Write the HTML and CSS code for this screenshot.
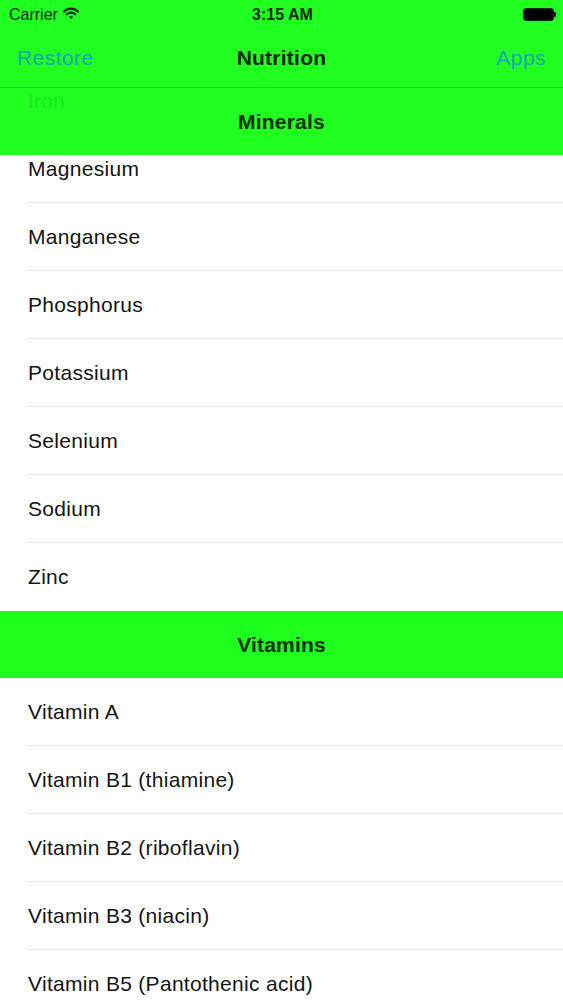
FILE: index.html
```html
<!DOCTYPE html>
<html>
<head>
<meta charset="utf-8">
<link rel="stylesheet" href="styles.css">
</head>
<body>
<div class="screen">
  <header class="top">
    <div class="status">
      <div class="status-left">
        <span class="carrier">Carrier</span>
        <svg class="wifi" width="16" height="13" viewBox="0 0 15 12">
          <path d="M1 4.2 A9 9 0 0 1 14 4.2" fill="none" stroke="#0c2a0c" stroke-width="2" stroke-linecap="round"/>
          <path d="M3.5 6.8 A5.6 5.6 0 0 1 11.5 6.8" fill="none" stroke="#0c2a0c" stroke-width="2" stroke-linecap="round"/>
          <path d="M5.6 9.2 A2.6 2.6 0 0 1 9.4 9.2 L7.5 11.2 Z" fill="#0c2a0c"/>
        </svg>
      </div>
      <div class="time">3:15 AM</div>
      <div class="status-right">
        <div class="battery"><div class="battery-body"></div><div class="battery-nub"></div></div>
      </div>
    </div>
    <nav class="navbar">
      <span class="nav-btn">Restore</span>
      <span class="nav-title">Nutrition</span>
      <span class="nav-btn nav-right">Apps</span>
    </nav>
    <div class="section-head pinned">
      <span class="ghost">Iron</span>
      <span class="section-title">Minerals</span>
    </div>
  </header>
  <div class="viewport">
    <ul class="rows scrolled">
      <li class="row">Magnesium</li>
      <li class="row">Manganese</li>
      <li class="row">Phosphorus</li>
      <li class="row">Potassium</li>
      <li class="row">Selenium</li>
      <li class="row">Sodium</li>
      <li class="row last">Zinc</li>
    </ul>
    <div class="section-head">
      <span class="section-title">Vitamins</span>
    </div>
    <ul class="rows">
      <li class="row">Vitamin A</li>
      <li class="row">Vitamin B1 (thiamine)</li>
      <li class="row">Vitamin B2 (riboflavin)</li>
      <li class="row">Vitamin B3 (niacin)</li>
      <li class="row">Vitamin B5 (Pantothenic acid)</li>
    </ul>
  </div>
</div>
</body>
</html>
```

FILE: styles.css
```css
* { box-sizing: border-box; }
html, body {
  margin: 0;
  padding: 0;
  background: #ffffff;
}
body {
  font-family: "Liberation Sans", Arial, sans-serif;
  color: #141414;
}
.screen {
  width: 563px;
  height: 1000px;
  overflow: hidden;
  display: flex;
  flex-direction: column;
}
.top {
  background: #20ff20;
  display: flex;
  flex-direction: column;
  flex: none;
}
.status {
  height: 29px;
  display: grid;
  grid-template-columns: 1fr auto 1fr;
  align-items: center;
  padding: 0 7px 0 9px;
  color: #0c2a0c;
}
.status-left {
  display: flex;
  align-items: center;
  gap: 5px;
}
.carrier {
  font-size: 16px;
  line-height: 1;
}
.wifi {
  display: block;
  margin-top: -2px;
}
.time {
  font-size: 16px;
  font-weight: bold;
  line-height: 1;
}
.status-right {
  display: flex;
  justify-content: flex-end;
}
.battery {
  display: flex;
  align-items: center;
  margin-top: -1px;
}
.battery-body {
  width: 31px;
  height: 13px;
  background: #000;
  border-radius: 3px;
  border: 1px solid #0a330a;
}
.battery-nub {
  width: 2px;
  height: 5px;
  background: #000;
  border-radius: 0 1px 1px 0;
}
.navbar {
  height: 59px;
  display: flex;
  align-items: center;
  justify-content: space-between;
  padding: 0 17px 0 17px;
  border-bottom: 1px solid #1ad41a;
  font-size: 21px;
  position: relative;
}
.nav-btn {
  color: #19a6ad;
  letter-spacing: 0.45px;
}
.nav-title {
  position: absolute;
  left: 0;
  right: 0;
  text-align: center;
  font-weight: bold;
  color: #0b260b;
  letter-spacing: 0.25px;
  pointer-events: none;
}
.section-head {
  height: 67px;
  background: #1eff1e;
  display: flex;
  align-items: center;
  justify-content: center;
  position: relative;
  flex: none;
}
.section-head.pinned {
  background: transparent;
}
.section-title {
  font-size: 21px;
  font-weight: bold;
  color: #0b2e0b;
  letter-spacing: 0.2px;
}
.ghost {
  position: absolute;
  left: 28px;
  top: 1px;
  font-size: 21px;
  color: #1be81b;
  letter-spacing: 0.2px;
}
.viewport {
  flex: 1;
  overflow: hidden;
  display: flex;
  flex-direction: column;
}
.rows {
  list-style: none;
  margin: 0;
  padding: 0 0 0 28px;
  flex: none;
}
.rows.scrolled {
  margin-top: -20px;
}
.row {
  height: 68px;
  line-height: 67px;
  font-size: 21px;
  letter-spacing: 0.3px;
  border-bottom: 1px solid #e4e4e4;
  white-space: nowrap;
}
.row.last {
  border-bottom: none;
}
```
